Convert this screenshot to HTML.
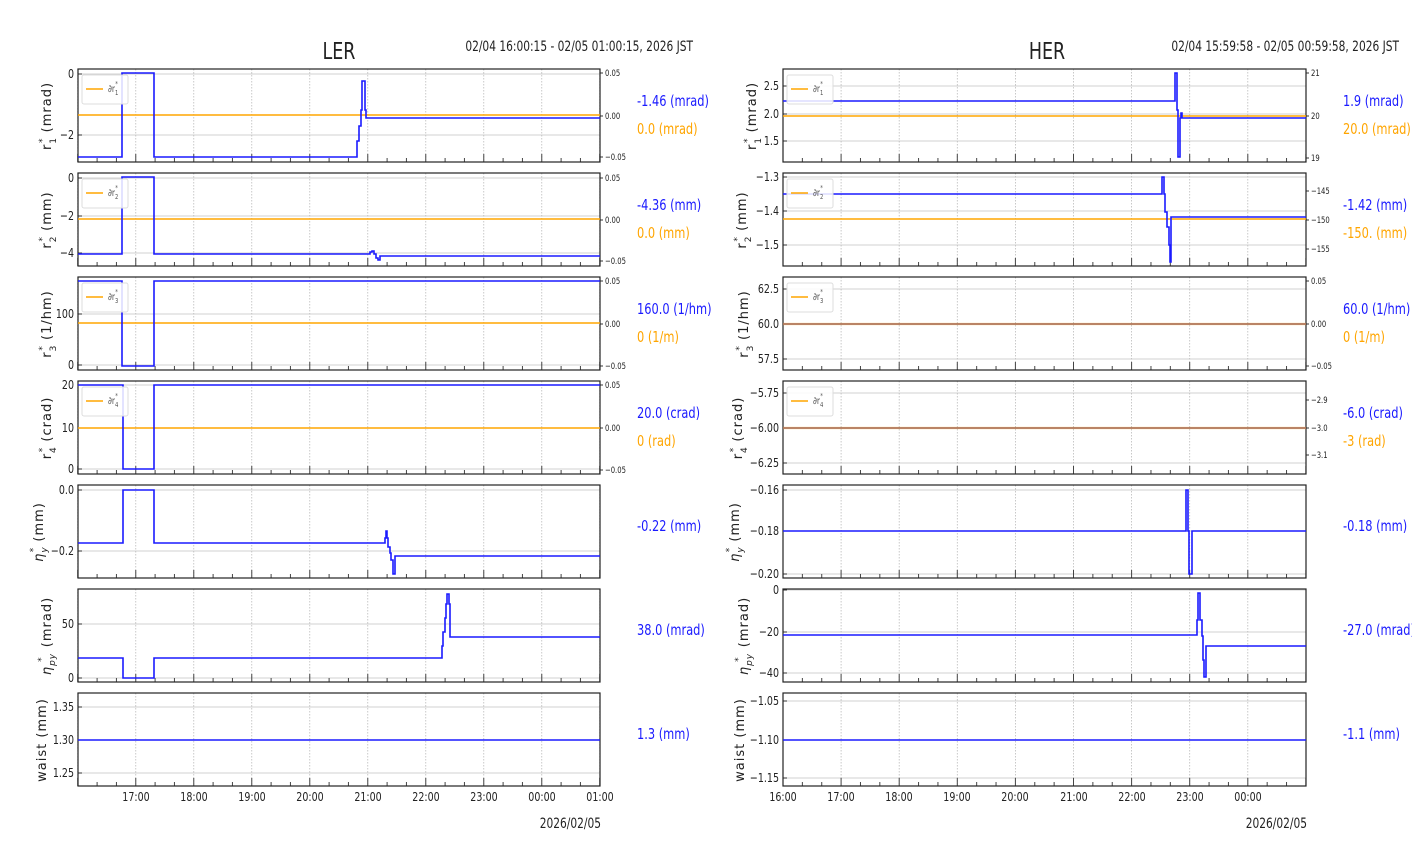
<!DOCTYPE html>
<html><head><meta charset="utf-8"><style>
html,body{margin:0;padding:0;background:#fff;width:1412px;height:864px;overflow:hidden}
svg{display:block}
text{font-family:"DejaVu Sans","Liberation Sans",sans-serif;fill:#222}
.tk{font-size:12.5px}
.rt{font-size:9px}
.yl{font-family:"DejaVu Sans","Liberation Sans",sans-serif;font-size:13px;letter-spacing:1px}
.vb{fill:#1a1aff;font-size:15px}
.vo{fill:#ffa500;font-size:15px}
.lg{font-size:10px;fill:#555}
</style></head><body>
<svg id="s" width="1412" height="864" xmlns="http://www.w3.org/2000/svg">
<g id="ax"></g>
<g id="cond">
<text x="339" y="59" text-anchor="middle" style="font-size:23px">LER</text>
<text x="1047" y="59" text-anchor="middle" style="font-size:23px">HER</text>
<text x="693" y="51" text-anchor="end" style="font-size:14px">02/04 16:00:15 - 02/05 01:00:15, 2026 JST</text>
<text x="1399" y="51" text-anchor="end" style="font-size:14px">02/04 15:59:58 - 02/05 00:59:58, 2026 JST</text>

<g class="tk" text-anchor="end">
<text x="74" y="78">0</text><text x="74" y="139">−2</text>
<text x="74" y="182">0</text><text x="74" y="220">−2</text><text x="74" y="257">−4</text>
<text x="74" y="318">100</text><text x="74" y="369">0</text>
<text x="74" y="389">20</text><text x="74" y="432">10</text><text x="74" y="473">0</text>
<text x="74" y="494">0.0</text><text x="74" y="555">−0.2</text>
<text x="74" y="628">50</text><text x="74" y="682">0</text>
<text x="74" y="711">1.35</text><text x="74" y="744">1.30</text><text x="74" y="777">1.25</text>
</g>
<g class="rt">
<text x="605" y="76">0.05</text><text x="605" y="119">0.00</text><text x="605" y="160">−0.05</text>
<text x="605" y="181">0.05</text><text x="605" y="223">0.00</text><text x="605" y="264">−0.05</text>
<text x="605" y="284">0.05</text><text x="605" y="327">0.00</text><text x="605" y="369">−0.05</text>
<text x="605" y="388">0.05</text><text x="605" y="431">0.00</text><text x="605" y="473">−0.05</text>
</g>
<g class="tk" text-anchor="middle">
<text x="136" y="801">17:00</text><text x="194" y="801">18:00</text><text x="252" y="801">19:00</text><text x="310" y="801">20:00</text><text x="368" y="801">21:00</text><text x="426" y="801">22:00</text><text x="484" y="801">23:00</text><text x="542" y="801">00:00</text><text x="600" y="801">01:00</text>
</g>
<text x="601" y="828" text-anchor="end" class="tk" style="font-size:14px">2026/02/05</text>

<g class="tk" text-anchor="end">
<text x="779" y="90">2.5</text><text x="779" y="118">2.0</text><text x="779" y="145">1.5</text>
<text x="779" y="181">−1.3</text><text x="779" y="215">−1.4</text><text x="779" y="249">−1.5</text>
<text x="779" y="293">62.5</text><text x="779" y="328">60.0</text><text x="779" y="363">57.5</text>
<text x="779" y="397">−5.75</text><text x="779" y="432">−6.00</text><text x="779" y="467">−6.25</text>
<text x="779" y="494">−0.16</text><text x="779" y="535">−0.18</text><text x="779" y="578">−0.20</text>
<text x="779" y="594">0</text><text x="779" y="636">−20</text><text x="779" y="677">−40</text>
<text x="779" y="705">−1.05</text><text x="779" y="744">−1.10</text><text x="779" y="782">−1.15</text>
</g>
<g class="rt">
<text x="1311" y="76">21</text><text x="1311" y="119">20</text><text x="1311" y="161">19</text>
<text x="1311" y="194">−145</text><text x="1311" y="223">−150</text><text x="1311" y="252">−155</text>
<text x="1311" y="284">0.05</text><text x="1311" y="327">0.00</text><text x="1311" y="369">−0.05</text>
<text x="1311" y="403">−2.9</text><text x="1311" y="431">−3.0</text><text x="1311" y="458">−3.1</text>
</g>
<g class="tk" text-anchor="middle">
<text x="783" y="801">16:00</text><text x="841" y="801">17:00</text><text x="899" y="801">18:00</text><text x="957" y="801">19:00</text><text x="1015" y="801">20:00</text><text x="1074" y="801">21:00</text><text x="1132" y="801">22:00</text><text x="1190" y="801">23:00</text><text x="1248" y="801">00:00</text>
</g>
<text x="1307" y="828" text-anchor="end" class="tk" style="font-size:14px">2026/02/05</text>

<text x="637" y="106" class="vb">-1.46 (mrad)</text><text x="637" y="134" class="vo">0.0 (mrad)</text>
<text x="637" y="210" class="vb">-4.36 (mm)</text><text x="637" y="238" class="vo">0.0 (mm)</text>
<text x="637" y="314" class="vb">160.0 (1/hm)</text><text x="637" y="342" class="vo">0 (1/m)</text>
<text x="637" y="418" class="vb">20.0 (crad)</text><text x="637" y="446" class="vo">0 (rad)</text>
<text x="637" y="531" class="vb">-0.22 (mm)</text>
<text x="637" y="635" class="vb">38.0 (mrad)</text>
<text x="637" y="739" class="vb">1.3 (mm)</text>

<text x="1343" y="106" class="vb">1.9 (mrad)</text><text x="1343" y="134" class="vo">20.0 (mrad)</text>
<text x="1343" y="210" class="vb">-1.42 (mm)</text><text x="1343" y="238" class="vo">-150. (mm)</text>
<text x="1343" y="314" class="vb">60.0 (1/hm)</text><text x="1343" y="342" class="vo">0 (1/m)</text>
<text x="1343" y="418" class="vb">-6.0 (crad)</text><text x="1343" y="446" class="vo">-3 (rad)</text>
<text x="1343" y="531" class="vb">-0.18 (mm)</text>
<text x="1343" y="635" class="vb">-27.0 (mrad)</text>
<text x="1343" y="739" class="vb">-1.1 (mm)</text>
</g>

<g class="yl" text-anchor="middle">
<text transform="translate(51,116) rotate(-90)">r<tspan dy="5" font-size="9">1</tspan><tspan dx="-6" dy="-11" font-size="9">*</tspan><tspan dy="6"> (mrad)</tspan></text>
<text transform="translate(51,220) rotate(-90)">r<tspan dy="5" font-size="9">2</tspan><tspan dx="-6" dy="-11" font-size="9">*</tspan><tspan dy="6"> (mm)</tspan></text>
<text transform="translate(51,324) rotate(-90)">r<tspan dy="5" font-size="9">3</tspan><tspan dx="-6" dy="-11" font-size="9">*</tspan><tspan dy="6"> (1/hm)</tspan></text>
<text transform="translate(51,428) rotate(-90)">r<tspan dy="5" font-size="9">4</tspan><tspan dx="-6" dy="-11" font-size="9">*</tspan><tspan dy="6"> (crad)</tspan></text>
<text transform="translate(43,532) rotate(-90)"><tspan font-style="italic">η</tspan><tspan dy="4" font-size="9" font-style="italic">y</tspan><tspan dx="-6" dy="-11" font-size="9">*</tspan><tspan dy="7"> (mm)</tspan></text>
<text transform="translate(51,636) rotate(-90)"><tspan font-style="italic">η</tspan><tspan dy="4" font-size="9" font-style="italic">py</tspan><tspan dx="-9" dy="-11" font-size="9">*</tspan><tspan dx="4" dy="7"> (mrad)</tspan></text>
<text transform="translate(46,740) rotate(-90)">waist (mm)</text>

<text transform="translate(756,116) rotate(-90)">r<tspan dy="5" font-size="9">1</tspan><tspan dx="-6" dy="-11" font-size="9">*</tspan><tspan dy="6"> (mrad)</tspan></text>
<text transform="translate(746,220) rotate(-90)">r<tspan dy="5" font-size="9">2</tspan><tspan dx="-6" dy="-11" font-size="9">*</tspan><tspan dy="6"> (mm)</tspan></text>
<text transform="translate(748,324) rotate(-90)">r<tspan dy="5" font-size="9">3</tspan><tspan dx="-6" dy="-11" font-size="9">*</tspan><tspan dy="6"> (1/hm)</tspan></text>
<text transform="translate(742,428) rotate(-90)">r<tspan dy="5" font-size="9">4</tspan><tspan dx="-6" dy="-11" font-size="9">*</tspan><tspan dy="6"> (crad)</tspan></text>
<text transform="translate(739,532) rotate(-90)"><tspan font-style="italic">η</tspan><tspan dy="4" font-size="9" font-style="italic">y</tspan><tspan dx="-6" dy="-11" font-size="9">*</tspan><tspan dy="7"> (mm)</tspan></text>
<text transform="translate(748,636) rotate(-90)"><tspan font-style="italic">η</tspan><tspan dy="4" font-size="9" font-style="italic">py</tspan><tspan dx="-9" dy="-11" font-size="9">*</tspan><tspan dx="4" dy="7"> (mrad)</tspan></text>
<text transform="translate(744,740) rotate(-90)">waist (mm)</text>
</g>

<g id="data" fill="none" stroke-width="1.6" stroke-linejoin="miter"></g>
<g id="leg"></g>
</svg>
<script>
var NS="http://www.w3.org/2000/svg";
function el(p,t,a){var e=document.createElementNS(NS,t);for(var k in a)e.setAttribute(k,a[k]);p.appendChild(e);return e;}
var ax=document.getElementById('ax'),dg=document.getElementById('data'),lg=document.getElementById('leg');
var T=[69,173,277,381,485,589,693],H=93;
function axes(x0,x1,y0,hx,yt,rt,hstart){
 var y1=y0+H;
 yt.forEach(function(y){el(ax,'line',{x1:x0,x2:x1,y1:y,y2:y,stroke:'#d0d0d0','stroke-width':1});
  el(ax,'line',{x1:x0,x2:x0+4,y1:y,y2:y,stroke:'#333','stroke-width':1});});
 for(var m=hstart*60;m<=25*60;m+=20){var x=hx(m/60);if(x<x0-0.5||x>x1+0.5)continue;
  var maj=(m%60==0);
  if(maj) el(ax,'line',{x1:x,x2:x,y1:y0,y2:y1,stroke:'#bbb','stroke-width':0.8,'stroke-dasharray':'1.5,1.5'});
  el(ax,'line',{x1:x,x2:x,y1:y1,y2:y1-(maj?8:4),stroke:'#444','stroke-width':1});}
 (rt||[]).forEach(function(y){el(ax,'line',{x1:x1,x2:x1+3,y1:y,y2:y,stroke:'#333','stroke-width':1});});
 el(ax,'rect',{x:x0,y:y0,width:x1-x0,height:H,fill:'none',stroke:'#222','stroke-width':1.2});
}
function LX(h){return 78+58*(h-16.004);}
function RX(h){return 783+58.1*(h-16);}
var LY=[[74,135],[178,216,253],[314,365],[385,428,469],[490,551],[624,678],[707,740,773]];
var LR=[[73,116,157],[178,220,261],[281,324,366],[385,428,470]];
var RY=[[86,114,141],[177,211,245],[289,324,359],[393,428,463],[490,531,574],[590,632,673],[701,740,778]];
var RR=[[73,116,158],[191,220,249],[281,324,366],[400,428,455]];
for(var i=0;i<7;i++){axes(78,600,T[i],LX,LY[i],LR[i],16);axes(783,1306,T[i],RX,RY[i],RR[i],16);}
function step(pts,col){var d='M'+pts[0][0]+' '+pts[0][1];var py=pts[0][1];
 for(var j=1;j<pts.length;j++){d+=' L'+pts[j][0]+' '+py+' L'+pts[j][0]+' '+pts[j][1];py=pts[j][1];}
 el(dg,'path',{d:d,stroke:col||'#1a1aff'});}
function hl(x0,x1,y,col,w){el(dg,'line',{x1:x0,x2:x1,y1:y,y2:y,stroke:col,'stroke-width':w||1.6});}
var O='#ffa500';
hl(78,600,115,O);step([[78,157],[122,73],[154,157],[357,141],[359,126],[361,110],[362,81],[365,110],[366,118],[600,118]]);
hl(78,600,219,O);step([[78,254],[122,177],[154,254],[370,252],[372,251],[374,254],[376,258],[378,260],[380,256],[600,256]]);
hl(78,600,323,O);step([[78,281],[122,366],[154,281],[600,281]]);
hl(78,600,428,O);step([[78,385],[123,469],[154,385],[600,385]]);
step([[78,543],[123,490],[154,543],[385,538],[386,531],[387,538],[388,547],[390,553],[391,560],[393,574],[395,556],[600,556]]);
step([[78,658],[123,678],[154,658],[442,646],[443,632],[445,618],[446,604],[447,594],[449,604],[450,637],[600,637]]);
hl(78,600,740,'#1a1aff');
hl(783,1306,116,O);step([[783,101],[1175,73],[1177,110],[1178,157],[1180,118],[1181,113],[1182,118],[1306,118]]);
hl(783,1306,219,O);step([[783,194],[1162,177],[1164,194],[1165,212],[1167,227],[1169,245],[1170,262],[1171,217],[1306,217]]);
hl(783,1306,324,'#1a1aff',1.4);hl(783,1306,324,'rgba(255,165,0,0.6)',2.2);
hl(783,1306,428,'#1a1aff',1.4);hl(783,1306,428,'rgba(255,165,0,0.6)',2.2);
step([[783,531],[1186,490],[1188,531],[1189,574],[1192,531],[1306,531]]);
step([[783,635],[1197,620],[1198,593],[1200,620],[1202,636],[1203,660],[1204,677],[1206,646],[1306,646]]);
hl(783,1306,740,'#1a1aff');
function legend(x,y,n){el(lg,'rect',{x:x,y:y,width:46,height:29,rx:2,fill:'rgba(255,255,255,0.85)',stroke:'#ddd','stroke-width':1});
 el(lg,'line',{x1:x+4,x2:x+21,y1:y+14,y2:y+14,stroke:O,'stroke-width':1.6});
 var t=el(lg,'text',{x:x+26,y:y+17,'class':'lg',transform:'translate('+(x+26)+',0) scale(0.75,1) translate('+(-(x+26))+',0)'});t.textContent='∂r';
 var s=el(t,'tspan',{dy:3,'font-size':7});s.textContent=n;var s2=el(t,'tspan',{dx:-4,dy:-9,'font-size':7});s2.textContent='*';}
for(var k=0;k<4;k++){legend(82,T[k]+6,k+1);legend(787,T[k]+6,k+1);}
var ts=document.querySelectorAll('#cond text');
for(var q=0;q<ts.length;q++){var x=parseFloat(ts[q].getAttribute('x'));
 ts[q].setAttribute('transform','translate('+x+',0) scale(0.76,1) translate('+(-x)+',0)');}
</script>
</body></html>
